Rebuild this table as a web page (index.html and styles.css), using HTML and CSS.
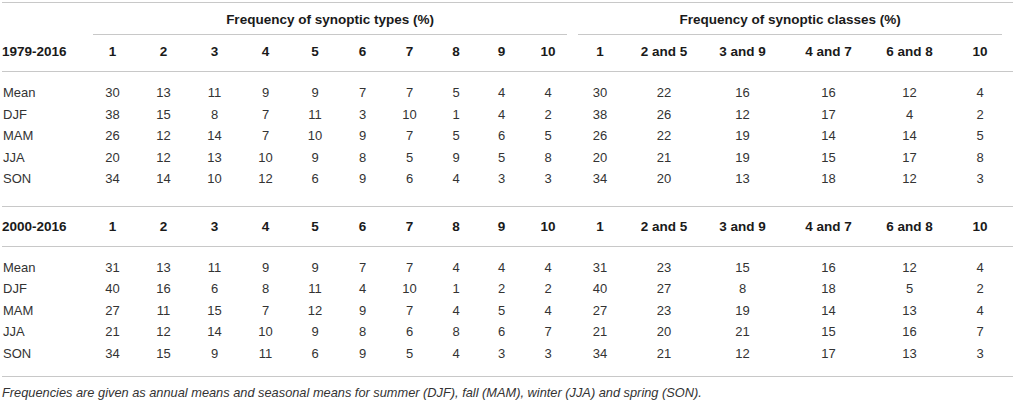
FILE: index.html
```html
<!DOCTYPE html>
<html lang="en">
  <head>
    <meta charset="UTF-8" />
    <meta name="viewport" content="width=device-width, initial-scale=1.0" />
    <title>Frequency of synoptic types and classes</title>
    <link rel="stylesheet" href="styles.css">
  </head>

  <body>
    <table class="freq">
      <colgroup>
        <col class="c-label" />
        <col class="c51" /><col class="c51" /><col class="c51" /><col class="c51" />
        <col class="c48" /><col class="c47" /><col class="c47" /><col class="c46" />
        <col class="c45" /><col class="c48" />
        <col class="c56" /><col class="c72" /><col class="c85" /><col class="c87" />
        <col class="c75" /><col class="c66" />
      </colgroup>

      <!-- Cabecera de grupos -->
      <thead>
        <tr class="groups">
          <th></th>
          <th colspan="10"><div class="group group-types">Frequency of synoptic types (%)</div></th>
          <th colspan="6"><div class="group group-classes">Frequency of synoptic classes (%)</div></th>
        </tr>
      </thead>

      <!-- Periodo 1979-2016 -->
      <tbody class="period">
        <tr class="cols">
          <th class="label">1979-2016</th>
          <th>1</th><th>2</th><th>3</th><th>4</th><th>5</th>
          <th>6</th><th>7</th><th>8</th><th>9</th><th>10</th>
          <th>1</th><th>2 and 5</th><th>3 and 9</th><th>4 and 7</th><th>6 and 8</th><th>10</th>
        </tr>
        <tr class="first">
          <td class="label">Mean</td>
          <td>30</td><td>13</td><td>11</td><td>9</td><td>9</td><td>7</td><td>7</td><td>5</td><td>4</td><td>4</td>
          <td>30</td><td>22</td><td>16</td><td>16</td><td>12</td><td>4</td>
        </tr>
        <tr>
          <td class="label">DJF</td>
          <td>38</td><td>15</td><td>8</td><td>7</td><td>11</td><td>3</td><td>10</td><td>1</td><td>4</td><td>2</td>
          <td>38</td><td>26</td><td>12</td><td>17</td><td>4</td><td>2</td>
        </tr>
        <tr>
          <td class="label">MAM</td>
          <td>26</td><td>12</td><td>14</td><td>7</td><td>10</td><td>9</td><td>7</td><td>5</td><td>6</td><td>5</td>
          <td>26</td><td>22</td><td>19</td><td>14</td><td>14</td><td>5</td>
        </tr>
        <tr>
          <td class="label">JJA</td>
          <td>20</td><td>12</td><td>13</td><td>10</td><td>9</td><td>8</td><td>5</td><td>9</td><td>5</td><td>8</td>
          <td>20</td><td>21</td><td>19</td><td>15</td><td>17</td><td>8</td>
        </tr>
        <tr class="last">
          <td class="label">SON</td>
          <td>34</td><td>14</td><td>10</td><td>12</td><td>6</td><td>9</td><td>6</td><td>4</td><td>3</td><td>3</td>
          <td>34</td><td>20</td><td>13</td><td>18</td><td>12</td><td>3</td>
        </tr>
      </tbody>

      <!-- Periodo 2000-2016 -->
      <tbody class="period">
        <tr class="cols">
          <th class="label">2000-2016</th>
          <th>1</th><th>2</th><th>3</th><th>4</th><th>5</th>
          <th>6</th><th>7</th><th>8</th><th>9</th><th>10</th>
          <th>1</th><th>2 and 5</th><th>3 and 9</th><th>4 and 7</th><th>6 and 8</th><th>10</th>
        </tr>
        <tr class="first">
          <td class="label">Mean</td>
          <td>31</td><td>13</td><td>11</td><td>9</td><td>9</td><td>7</td><td>7</td><td>4</td><td>4</td><td>4</td>
          <td>31</td><td>23</td><td>15</td><td>16</td><td>12</td><td>4</td>
        </tr>
        <tr>
          <td class="label">DJF</td>
          <td>40</td><td>16</td><td>6</td><td>8</td><td>11</td><td>4</td><td>10</td><td>1</td><td>2</td><td>2</td>
          <td>40</td><td>27</td><td>8</td><td>18</td><td>5</td><td>2</td>
        </tr>
        <tr>
          <td class="label">MAM</td>
          <td>27</td><td>11</td><td>15</td><td>7</td><td>12</td><td>9</td><td>7</td><td>4</td><td>5</td><td>4</td>
          <td>27</td><td>23</td><td>19</td><td>14</td><td>13</td><td>4</td>
        </tr>
        <tr>
          <td class="label">JJA</td>
          <td>21</td><td>12</td><td>14</td><td>10</td><td>9</td><td>8</td><td>6</td><td>8</td><td>6</td><td>7</td>
          <td>21</td><td>20</td><td>21</td><td>15</td><td>16</td><td>7</td>
        </tr>
        <tr class="last">
          <td class="label">SON</td>
          <td>34</td><td>15</td><td>9</td><td>11</td><td>6</td><td>9</td><td>5</td><td>4</td><td>3</td><td>3</td>
          <td>34</td><td>21</td><td>12</td><td>17</td><td>13</td><td>3</td>
        </tr>
      </tbody>
    </table>

    <p class="note">
      Frequencies are given as annual means and seasonal means for summer (DJF), fall (MAM), winter (JJA) and spring (SON).
    </p>
  </body>
</html>
```

FILE: styles.css
```css
body {
  font-family: "Liberation Sans", Arial, sans-serif;
  font-size: 13px;
  color: #333;
  margin: 0;
  background-color: #fff;
}

.freq {
  width: 1011px;
  margin: 2px 0 0 2px;
  table-layout: fixed;
  border-collapse: separate;
  border-spacing: 0;
  border-top: 1px solid #c8c8c8;
}

/* anchos de columna */
.c-label { width: 85px; }
.c45 { width: 45px; }
.c46 { width: 46px; }
.c47 { width: 47px; }
.c48 { width: 48px; }
.c51 { width: 51px; }
.c56 { width: 56px; }
.c66 { width: 66px; }
.c72 { width: 72px; }
.c75 { width: 75px; }
.c85 { width: 85px; }
.c87 { width: 87px; }

th,
td {
  padding: 0;
  text-align: center;
  white-space: nowrap;
}

th {
  font-size: 13.5px;
  font-weight: bold;
  color: #1a1a1a;
  line-height: 16px;
}

td {
  line-height: 21.5px;
}

.label {
  text-align: left;
  padding-left: 1px;
}

/* titulos de grupo */
.group {
  padding: 9px 0 6px;
  border-bottom: 1px solid #c8c8c8;
}

.group-types {
  margin: 0 5px 0 6px;
}

.group-classes {
  margin: 0 11px 0 6px;
}

/* fila de cabecera de cada periodo */
.cols th {
  padding: 9px 0 11px;
  border-bottom: 1px solid #c8c8c8;
}

.period + .period .cols th {
  padding-top: 12px;
}

.first td {
  padding-top: 10px;
}

.last td {
  padding-bottom: 16px;
  border-bottom: 1px solid #c8c8c8;
}

.period + .period .last td {
  padding-bottom: 12px;
}

.note {
  margin: 0;
  padding: 8px 0 0 2px;
  font-size: 12.8px;
  font-style: italic;
  line-height: 16px;
}
```
